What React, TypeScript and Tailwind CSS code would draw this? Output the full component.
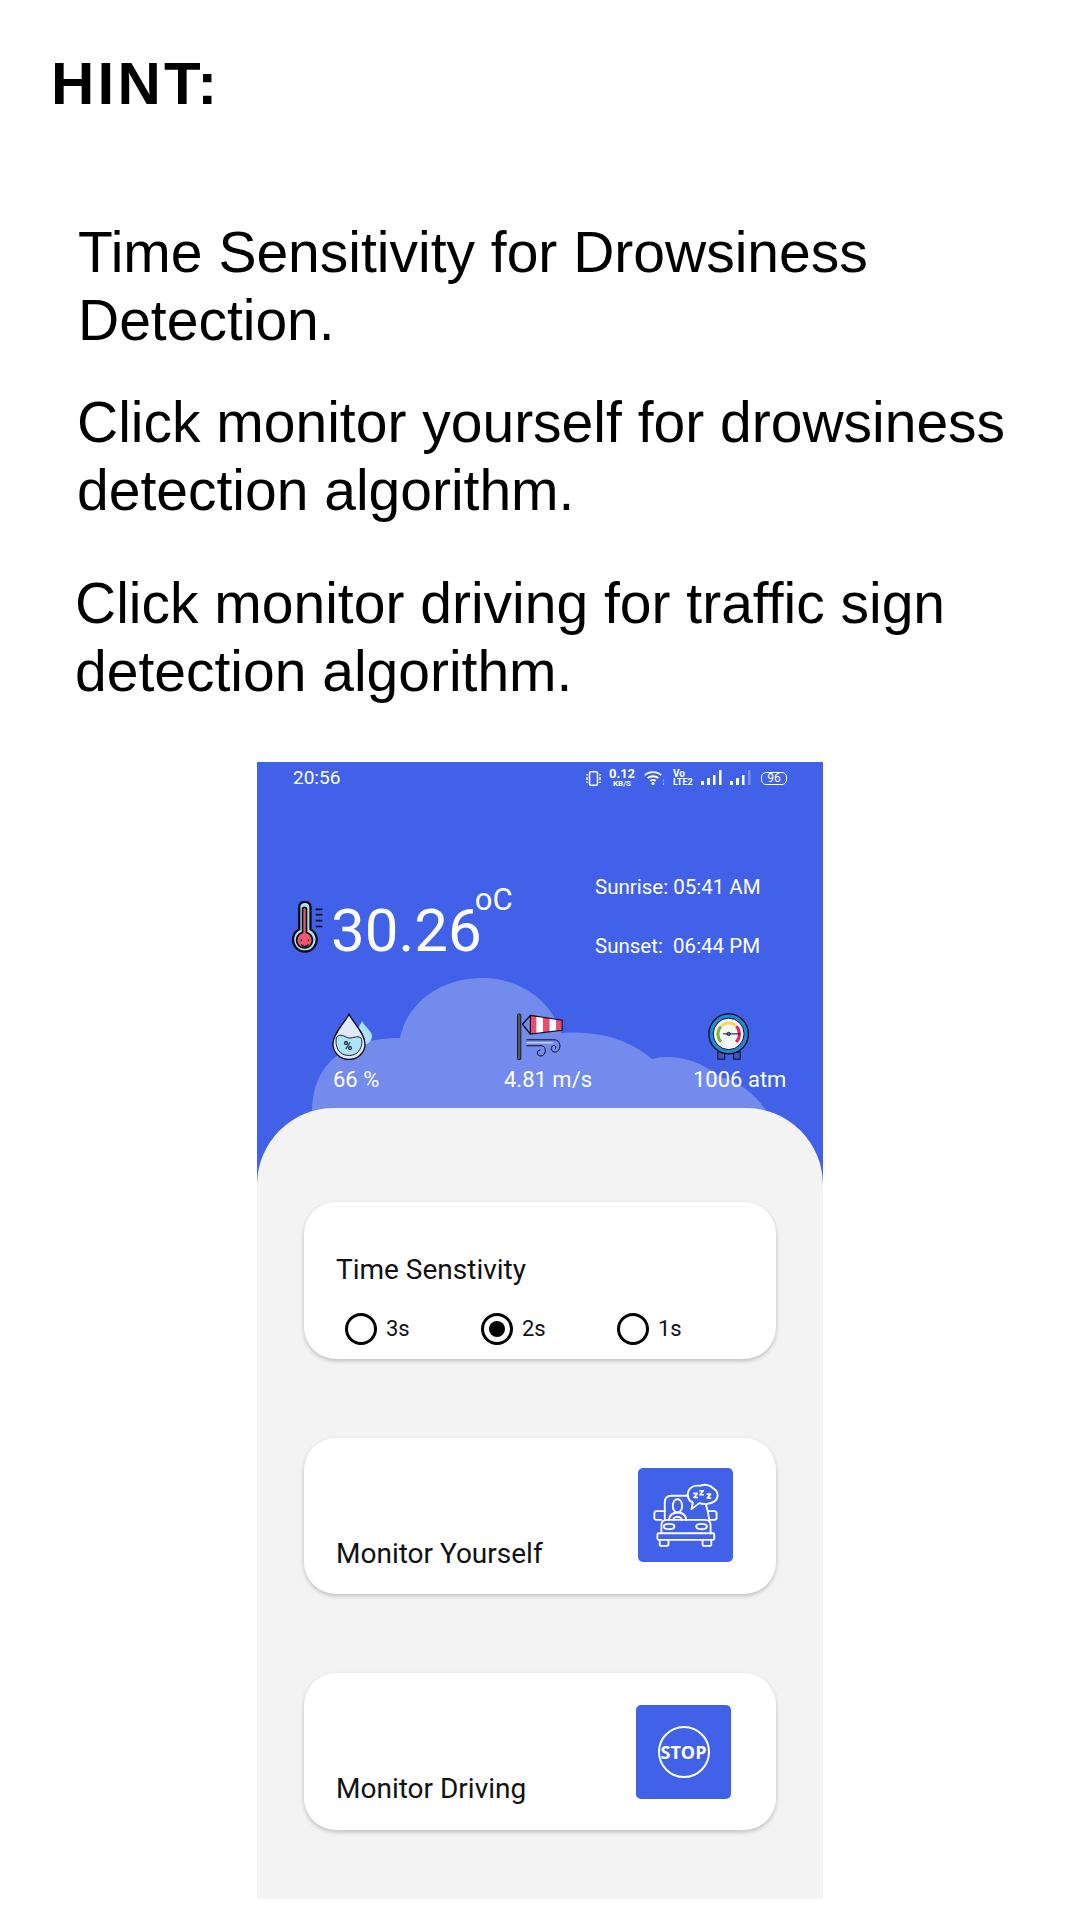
/**************************************************
    ICONS
***************************************************/
function Vibrate() {
    return (
        <svg width="17" height="15" viewBox="0 0 17 15" fill="none" stroke="white">
            <rect x="4.500" y="0.800" width="8" height="13.400" rx="1.500" strokeWidth="1.500" />
            <path d="M2 3v1.500M2 6v3M2 10.500v1.500M15 3v1.500M15 6v3M15 10.500v1.500" strokeWidth="1.400" />
        </svg>
    );
}

function Wifi() {
    return (
        <svg width="22" height="16" viewBox="0 0 22 16" fill="none" stroke="white" strokeWidth="1.800">
            <path d="M0.800 5.200C5 1 13 1 17.200 5.200" />
            <path d="M3.600 8.200C6.500 5.600 11.500 5.600 14.400 8.200" />
            <path d="M6.300 11C7.800 9.800 10.200 9.800 11.700 11" />
            <circle cx="9" cy="13.600" r="1.500" fill="white" stroke="none" />
            <path d="M19.500 9.500v2M19.500 13v2" strokeWidth="1.200" opacity="0.5" />
        </svg>
    );
}

function Signal({ dim }: { dim?: boolean }) {
    return (
        <svg width="21" height="16" viewBox="0 0 21 16" fill="white">
            <rect x="0" y="11" width="3" height="4" />
            <rect x="6" y="8" width="3" height="7" />
            <rect x="12" y="5" width="2.500" height="10" />
            <rect x="18" y="0" width="2.500" height="15" opacity={dim ? 0.3 : 1} />
        </svg>
    );
}

function Thermometer() {
    return (
        <svg width="31" height="52" viewBox="36 33 94 157" fill="none" className="mt-[16px] shrink-0">
            <path d="M58 118V50a17 15 0 0 1 34 0v68a36 36 0 1 1-34 0z" fill="#a9e4f4" stroke="#0b0b14" strokeWidth="7" />
            <path d="M68 128V58a6 6 0 0 1 12 0v70a24 24 0 1 1-12 0z" fill="#f0566e" stroke="#0b0b14" strokeWidth="5" />
            <path d="M62 152h4M84 152h4" stroke="#0b0b14" strokeWidth="5" />
            <path d="M64 164a13 13 0 0 0 22 0" stroke="#0b0b14" strokeWidth="4" />
            <path d="M108 58h20M108 74h20M108 92h20M108 110h20" stroke="#0b0b14" strokeWidth="5" />
        </svg>
    );
}

function Drop() {
    return (
        <svg width="40" height="47" viewBox="0 0 40 47" fill="none">
            <path d="M30 8C28 13 23 18 23 24C23 30 28 33 32 32C37 31 40 27 40 23C40 18 33 14 30 8z" fill="#a9e1f8" />
            <path d="M17 1C13 10 1 20 1 31A16 15.500 0 0 0 33 31C33 20 21 10 17 1z" fill="#dfe9f7" stroke="#0b0b14" strokeWidth="1.300" />
            <path d="M4.500 24C10 19 14 26 19 25C23 24 27 23 29 25C31 29 29.500 36 25 40C19 44 11 43 7 38C4 34 3.500 29 4.500 24z" fill="#aee4fb" stroke="#0b0b14" strokeWidth="0.900" />
            <text x="16" y="37" textAnchor="middle" fontSize="12" fontWeight="700" fill="#0b0b14" fontFamily="Roboto, sans-serif">%</text>
        </svg>
    );
}

function Windsock() {
    return (
        <svg width="48" height="47" viewBox="50 38 142 142" fill="none">
            <rect x="53" y="41" width="10" height="138" rx="3" fill="#55565e" stroke="#0b0b14" strokeWidth="2.500" />
            <path d="M92 45L68 72L92 102" stroke="#0b0b14" strokeWidth="4" />
            <path d="M92 45L110 47V100L92 102z" fill="#f24a6e" />
            <path d="M110 47L130 50V98L110 100z" fill="#fff" />
            <path d="M130 50L150 53V95L130 98z" fill="#f24a6e" />
            <path d="M150 53L170 56V92L150 95z" fill="#fff" />
            <path d="M170 56L188 60V90L170 92z" fill="#f24a6e" />
            <path d="M92 45L188 60V90L92 102z" stroke="#0b0b14" strokeWidth="3.500" />
            <path d="M80 119H165C182 119 188 145 172 155C160 160 150 148 158 138C164 132 172 140 167 146" stroke="#0b0b14" strokeWidth="3" />
            <path d="M80 128H160" stroke="#e8eefb" strokeWidth="3" />
            <path d="M80 137H128C142 140 140 168 122 168C110 166 110 150 122 150" stroke="#0b0b14" strokeWidth="3" />
        </svg>
    );
}

function Gauge() {
    return (
        <svg width="42" height="47" viewBox="52 40 128 142" fill="none">
            <rect x="82" y="158" width="21" height="22" fill="#3f55c4" stroke="#0b0b14" strokeWidth="3" />
            <rect x="130" y="158" width="20" height="22" fill="#3f55c4" stroke="#0b0b14" strokeWidth="3" />
            <ellipse cx="115" cy="103" rx="60" ry="61" fill="#1e88d8" stroke="#0b0b14" strokeWidth="4" />
            <ellipse cx="115" cy="103" rx="47" ry="48" fill="#f4f6fb" stroke="#0b0b14" strokeWidth="3" />
            <path d="M92 128C78 112 80 92 92 80" stroke="#7cb342" strokeWidth="9" />
            <path d="M94 78C106 67 124 67 136 78" stroke="#fbd84b" strokeWidth="9" />
            <path d="M138 80C150 92 152 112 138 128" stroke="#e91e63" strokeWidth="9" />
            <path d="M98 103H150" stroke="#0b0b14" strokeWidth="3" />
            <circle cx="115" cy="103" r="5" fill="#1e88d8" stroke="#0b0b14" strokeWidth="2.500" />
        </svg>
    );
}

function DrowsyCar() {
    return (
        <svg width="95" height="95" viewBox="55 57 284 284" fill="none" stroke="white" strokeWidth="5.500" strokeLinejoin="round" strokeLinecap="round">
            <path d="M135 212V160C135 148 142 140 155 140H205" />
            <path d="M258 165C262 178 266 195 268 212" />
            <path d="M215 180L219 160C205 155 200 138 206 125C212 112 228 108 242 110C254 104 272 108 280 118C294 125 298 142 286 155C274 166 250 166 238 162z" />
            <path d="M222 133H232L222 145H232M240 125H250L240 137H250M262 135H272L262 147H272" strokeWidth="5" />
            <ellipse cx="173" cy="170" rx="14" ry="20" />
            <path d="M147 212C150 195 160 190 173 190C186 190 197 195 200 212" />
            <path d="M160 212C162 200 184 200 186 212" />
            <path d="M135 186H110C105 186 104 190 104 194V206C104 210 106 212 110 212H125" />
            <path d="M266 186H284C289 186 290 190 290 194V206C290 210 288 212 284 212H272" />
            <path d="M125 252V228C125 218 132 212 142 212H255C265 212 272 218 272 228V252" />
            <ellipse cx="148" cy="232" rx="16" ry="8" />
            <ellipse cx="245" cy="232" rx="16" ry="8" />
            <rect x="113" y="252" width="170" height="20" rx="4" />
            <path d="M120 272V285C120 288 122 290 125 290H141C144 290 146 288 146 285V272" />
            <path d="M248 272V285C248 288 250 290 253 290H269C272 290 274 288 274 285V272" />
        </svg>
    );
}

/**************************************************
    SMALL PIECES
***************************************************/
function Radio({ label, checked, width }: { label: string; checked?: boolean; width: string }) {
    return (
        <div className={`flex items-center gap-[9px] ${width}`}>
            <span className="flex h-[32px] w-[32px] items-center justify-center rounded-full border-[3px] border-black">
                {checked && <span className="h-[16px] w-[16px] rounded-full bg-black" />}
            </span>
            <span className="text-[22px] leading-[24px] text-[#111]">{label}</span>
        </div>
    );
}

function MonitorCard({ title, height, tileClass, children }: { title: string; height: string; tileClass: string; children: React.ReactNode }) {
    return (
        <div className={`flex items-start justify-between rounded-[32px] bg-white pl-[32px] shadow-[0_2px_4px_rgba(0,0,0,0.22)] ${height}`}>
            <p className="mt-[98px] text-[28px] leading-[36px] text-[#111]">{title}</p>
            <div className={`flex h-[94px] w-[95px] items-center justify-center rounded-[5px] bg-[#4161e8] ${tileClass}`}>
                {children}
            </div>
        </div>
    );
}

/**************************************************
    RENDER COMPONENT
***************************************************/
export default function App() {
    return (
        <div className="h-[1920px] w-[1080px] overflow-hidden bg-white font-['Liberation_Sans',sans-serif] text-black">
            <div className="pl-[51px] pt-[50px]">
                <h1 className="text-[60px] font-bold leading-[68px] tracking-[3.200px]">HINT:</h1>
            </div>

            {/* hint text */}
            <div className="w-[1080px] text-[57px] leading-[68px]">
                <p className="ml-[78px] mt-[100px]">Time Sensitivity for Drowsiness Detection.</p>
                <p className="ml-[77px] mt-[34px]">Click monitor yourself for drowsiness detection algorithm.</p>
                <p className="ml-[75px] mt-[45px]">Click monitor driving for traffic sign detection algorithm.</p>
            </div>

            {/* phone screenshot */}
            <div className="relative ml-[257px] mt-[57px] flex h-[1137px] w-[566px] flex-col overflow-hidden bg-[#4161e8] font-['Roboto',sans-serif] text-white">
                {/* cloud */}
                <svg className="absolute left-0 top-0" width="566" height="360" viewBox="0 0 566 360" fill="white" fillOpacity="0.27">
                    <path d="M55 350C55 300 90 276 143 276C150 240 185 216 225 216C265 216 295 240 304 271C345 268 375 280 395 297C410 292 440 295 463 315C485 320 500 335 510 350Z" />
                </svg>

                {/* status bar */}
                <div className="relative flex h-[32px] items-center pl-[36px]">
                    <span className="w-[292px] text-[19px] leading-[20px]">20:56</span>
                    <Vibrate />
                    <div className="ml-[7px] flex w-[26px] flex-col items-center font-bold">
                        <span className="text-[13px] leading-[10px]">0.12</span>
                        <span className="text-[8px] leading-[9px]">KB/S</span>
                    </div>
                    <div className="ml-[9px]"><Wifi /></div>
                    <div className="ml-[7px] flex w-[20px] flex-col font-bold">
                        <span className="text-[10px] leading-[9px]">Vo</span>
                        <span className="text-[9px] leading-[9px]">LTE2</span>
                    </div>
                    <div className="ml-[8px]"><Signal /></div>
                    <div className="ml-[8px]"><Signal dim /></div>
                    <div className="ml-[10px] flex h-[13px] w-[26px] items-center justify-center rounded-[5px] border border-white text-[12px] leading-none">96</div>
                </div>

                {/* temperature + sun times */}
                <div className="relative mt-[81px] flex items-start">
                    <div className="flex w-[338px] items-start pl-[35px] pt-[10px]">
                        <Thermometer />
                        <span className="ml-[8px] mt-[26px] text-[60px] leading-[40px]">30.26</span>
                        <span className="-ml-[7px] mt-[4px] text-[31px] leading-[22px]">oC</span>
                    </div>
                    <div className="flex flex-col gap-[35px] whitespace-pre text-[20.500px] leading-[24px]">
                        <span>Sunrise: 05:41 AM</span>
                        <span>Sunset:  06:44 PM</span>
                    </div>
                </div>

                {/* weather stats */}
                <div className="relative mt-[55px] flex pl-[76px] text-[22px] leading-[24px]">
                    <div className="flex w-[171px] flex-col gap-[8px]">
                        <div className="-ml-[1px]"><Drop /></div>
                        <span>66 %</span>
                    </div>
                    <div className="flex w-[189px] flex-col gap-[8px]">
                        <div className="ml-[12px]"><Windsock /></div>
                        <span>4.81 m/s</span>
                    </div>
                    <div className="flex flex-col gap-[8px]">
                        <div className="ml-[15px]"><Gauge /></div>
                        <span>1006 atm</span>
                    </div>
                </div>

                {/* bottom sheet */}
                <div className="relative mt-[16px] flex flex-1 flex-col rounded-t-[77px] bg-[#f3f3f3] px-[47px] pt-[94px] text-[#111]">
                    <div className="flex h-[157px] flex-col rounded-[32px] bg-white pl-[32px] shadow-[0_2px_4px_rgba(0,0,0,0.22)]">
                        <p className="mt-[50px] text-[28px] leading-[36px]">Time Senstivity</p>
                        <div className="ml-[9px] mt-[25px] flex">
                            <Radio label="3s" width="w-[136px]" />
                            <Radio label="2s" checked width="w-[136px]" />
                            <Radio label="1s" width="w-[80px]" />
                        </div>
                    </div>

                    <div className="mt-[79px]">
                        <MonitorCard title="Monitor Yourself" height="h-[156px]" tileClass="mr-[43px] mt-[30px]">
                            <DrowsyCar />
                        </MonitorCard>
                    </div>

                    <div className="mt-[79px]">
                        <MonitorCard title="Monitor Driving" height="h-[157px]" tileClass="mr-[45px] mt-[32px]">
                            <div className="flex h-[52px] w-[52px] items-center justify-center rounded-full border-2 border-white font-['Open_Sans',sans-serif] text-[18px] font-bold text-white">
                                STOP
                            </div>
                        </MonitorCard>
                    </div>
                </div>
            </div>
        </div>
    );
}
